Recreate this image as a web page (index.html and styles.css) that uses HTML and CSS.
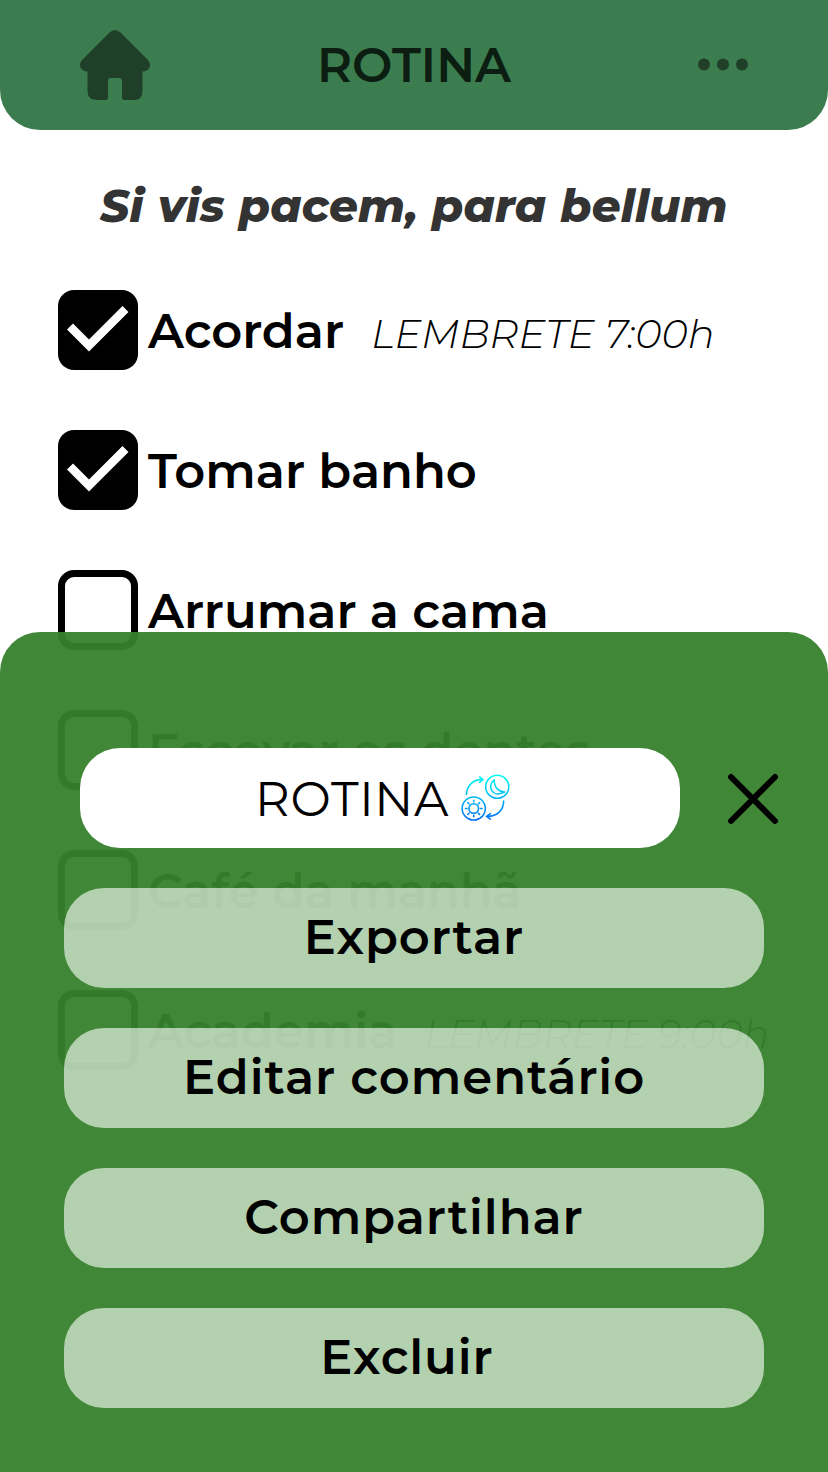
FILE: index.html
```html
<!DOCTYPE html>
<html lang="pt-BR">
<head>
<meta charset="utf-8">
<title>Rotina</title>
<link rel="stylesheet" href="styles.css">
</head>
<body>
<div class="screen">
  <header class="topbar">
    <svg class="home" viewBox="0 0 70 70"><path d="M29.500 2.500Q35-2.500 40.500 2.500L68 30Q71 33.500 69.500 37.500Q67.500 41.500 62.500 41.500V61Q62.500 70 54 70H44.500Q42 70 42 67.500V51Q42 48 39 48H31Q28 48 28 51V67.500Q28 70 25.500 70H17Q7.500 70 7.500 61V41.500Q2.500 41.500 .5 37.500Q-1 33.500 2 30Z"/></svg>
    <h1 class="title">ROTINA</h1>
    <svg class="dots" viewBox="0 0 50 12"><circle cx="6" cy="5.500" r="6"/><circle cx="25" cy="5.500" r="6"/><circle cx="44" cy="5.500" r="6"/></svg>
  </header>
  <main class="content">
    <p class="tagline">Si vis pacem, para bellum</p>
    <ul class="tasks">
      <li class="task">
        <span class="box done"><svg viewBox="0 0 80 80"><path d="M12 36.500L31 55.500L67.500 19"/></svg></span>
        <span class="label">Acordar</span>
        <span class="reminder">LEMBRETE 7:00h</span>
      </li>
      <li class="task">
        <span class="box done"><svg viewBox="0 0 80 80"><path d="M12 36.500L31 55.500L67.500 19"/></svg></span>
        <span class="label">Tomar banho</span>
      </li>
      <li class="task">
        <span class="box"></span>
        <span class="label">Arrumar a cama</span>
      </li>
      <li class="task">
        <span class="box"></span>
        <span class="label">Escovar os dentes</span>
      </li>
      <li class="task">
        <span class="box"></span>
        <span class="label">Café da manhã</span>
      </li>
      <li class="task">
        <span class="box"></span>
        <span class="label">Academia</span>
        <span class="reminder">LEMBRETE 9:00h</span>
      </li>
    </ul>
  </main>
  <section class="sheet">
    <div class="sheet-head">
      <div class="name">
        <span class="name-text">ROTINA</span>
        <svg class="cycle" viewBox="0 0 48 48">
          <defs><linearGradient id="sky" gradientUnits="userSpaceOnUse" x1="0" y1="0" x2="0" y2="48"><stop offset="0" stop-color="#00fff2"/><stop offset="1" stop-color="#0068f5"/></linearGradient></defs>
          <g fill="none" stroke="url(#sky)" stroke-width="1.600" stroke-linecap="round" stroke-linejoin="round">
            <circle cx="36" cy="12" r="11.800"/>
            <path d="M33 5C25 11 30.500 24 43.500 17.500C37 17 32.500 12 33 5Z"/>
            <circle cx="12" cy="34.200" r="11.800"/>
            <circle cx="12" cy="34.200" r="4.900"/>
            <path d="M12 25.700v1.700M12 41v1.700M3.500 34.200h1.700M18.800 34.200h1.700M6 28.200l1.200 1.200M16.800 39l1.200 1.200M6 40.200l1.200-1.200M16.800 29.400l1.200-1.200"/>
            <path d="M4.500 20C5 10 12 4.500 21 4.500M18 2l3.500 2.500l-3.500 3"/>
            <path d="M42.500 26.500C42.500 36 36 42.300 26 42.300M29 39.500l-4 2.800l4 2.700"/>
          </g>
        </svg>
      </div>
      <svg class="close" viewBox="0 0 50 50"><path d="M3 4L47 48M47 4L3 48"/></svg>
    </div>
    <div class="actions">
      <div class="action">Exportar</div>
      <div class="action">Editar comentário</div>
      <div class="action">Compartilhar</div>
      <div class="action remove">Excluir</div>
    </div>
  </section>
</div>
</body>
</html>
```
FILE: styles.css
```css
* { box-sizing: border-box; }
body { margin: 0; background: #fff; color: #000; font-family: Montserrat, Inter, "Open Sans", sans-serif; font-size: 48px; font-weight: 600; white-space: nowrap; }
.screen { position: relative; width: 828px; height: 1472px; overflow: hidden; }
svg { display: block; flex: none; overflow: visible; }
.topbar { height: 130px; padding: 0 80px; display: grid; grid-template-columns: 70px 1fr 70px; align-items: center; background: #3c7d50; border-radius: 0 0 40px 40px; }
.home { width: 70px; height: 70px; fill: #1f3f28; }
.title { margin: 0; font-size: 48px; font-weight: 600; line-height: 130px; text-align: center; color: #0c1d12; }
.dots { justify-self: end; width: 50px; height: 12px; fill: #1f3f28; }
.content { padding-top: 46px; }
.tagline { margin: 0; font-size: 45px; line-height: 60px; font-weight: 800; font-style: italic; letter-spacing: .2px; word-spacing: .7px; text-align: center; color: #333; }
.tasks { list-style: none; margin: 54px 0 0; padding: 0 0 0 58px; display: grid; gap: 60px; }
.task { height: 80px; line-height: 82px; display: flex; align-items: baseline; }
.box { flex: none; align-self: flex-start; width: 80px; height: 80px; margin-right: 10px; border: 7px solid #000; border-radius: 16px; }
.box.done { border: 0; background: #000; }
.box path { fill: none; stroke: #fff; stroke-width: 8.500; }
.reminder { margin-left: 27px; font-size: 40px; font-weight: 300; font-style: italic; }
.sheet { position: absolute; left: 0; right: 0; bottom: 0; height: 840px; padding: 116px 50px 0 64px; background: rgba(54, 130, 44, .95); border-radius: 40px 40px 0 0; }
.sheet-head { display: flex; align-items: center; justify-content: space-between; padding-left: 16px; }
.name { width: 600px; height: 100px; padding: 1px 0 0 175px; display: flex; align-items: center; background: #fff; border-radius: 40px; }
.name-text { width: 207px; padding-top: 1px; line-height: 98px; font-weight: 400; letter-spacing: .7px; }
.cycle { width: 47px; height: 47px; }
.close { width: 50px; height: 50px; }
.close path { stroke: #000; stroke-width: 6; stroke-linecap: round; }
.actions { width: 700px; margin-top: 40px; display: grid; gap: 40px; }
.action { height: 100px; line-height: 99px; text-align: center; letter-spacing: .02em; background: rgba(255, 255, 255, .605); border-radius: 40px; }
.action.remove { padding-right: 14px; }
```
